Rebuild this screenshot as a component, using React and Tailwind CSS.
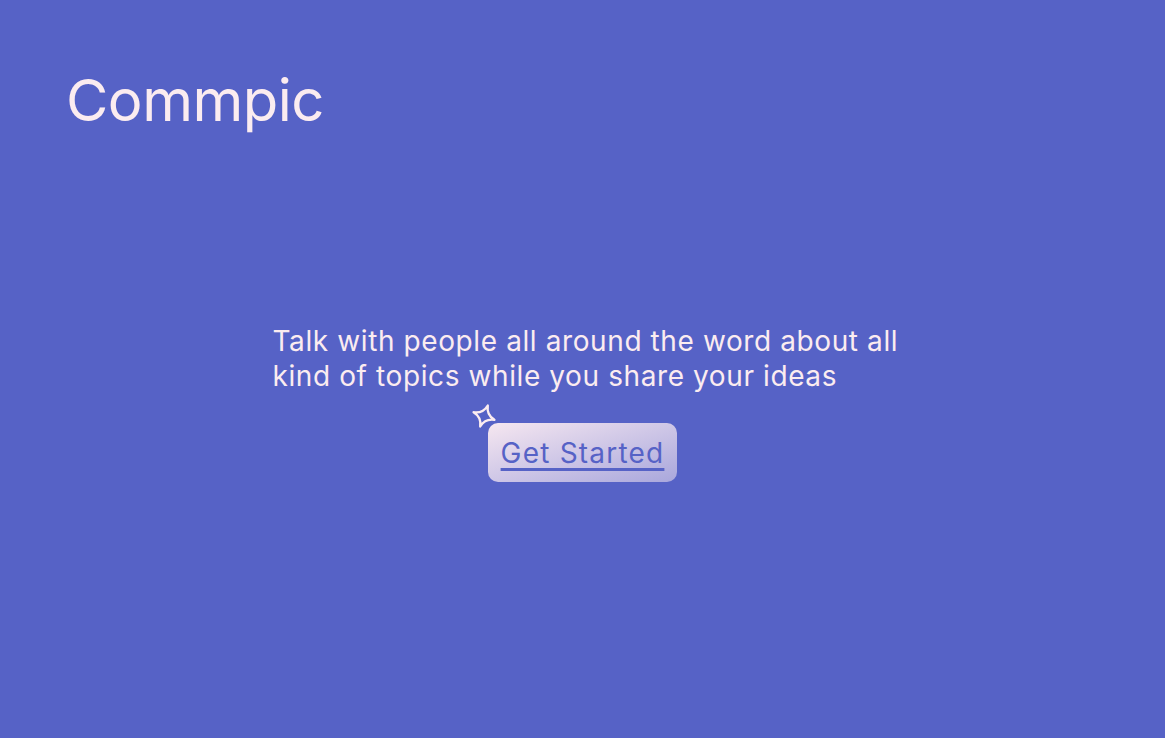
import React from 'react';

const Sparkle = () => (
  <svg
    width="28"
    height="28"
    viewBox="0 0 24 24"
    fill="none"
    stroke="currentColor"
    strokeWidth="2"
    strokeLinejoin="round"
    className="absolute -left-[18px] -top-[21px] rotate-[20deg] text-[#fbecf0]"
  >
    <path d="M12 2.5 Q13.6 10.4 21.5 12 Q13.6 13.6 12 21.5 Q10.4 13.6 2.5 12 Q10.4 10.4 12 2.5 Z" />
  </svg>
);

const App = () => {
  return (
    <div className="min-h-screen bg-[#5662c6] text-[#fbecf0] font-['Inter',sans-serif] flex flex-col">
      <header className="px-[66px] pt-[68px]">
        <h1 className="text-[58px] leading-[64px] tracking-[-0.5px] font-normal">Commpic</h1>
      </header>

      <main className="flex flex-col items-center pt-[192px]">
        <p className="w-[640px] pl-[10px] text-[28px] leading-[35px] tracking-[0.6px]">
          Talk with people all around the word about all kind of topics while you share your ideas
        </p>
        <div className="relative mt-[29px]">
          <Sparkle />
          <button className="h-[59px] px-[13px] rounded-[10px] bg-gradient-to-br from-[#f6e7f0] to-[#a9a7dc] text-[#5662c6] text-[28px] tracking-[1.2px] underline underline-offset-[5px] decoration-[3px]">
            Get Started
          </button>
        </div>
      </main>
    </div>
  );
};

export default App;
